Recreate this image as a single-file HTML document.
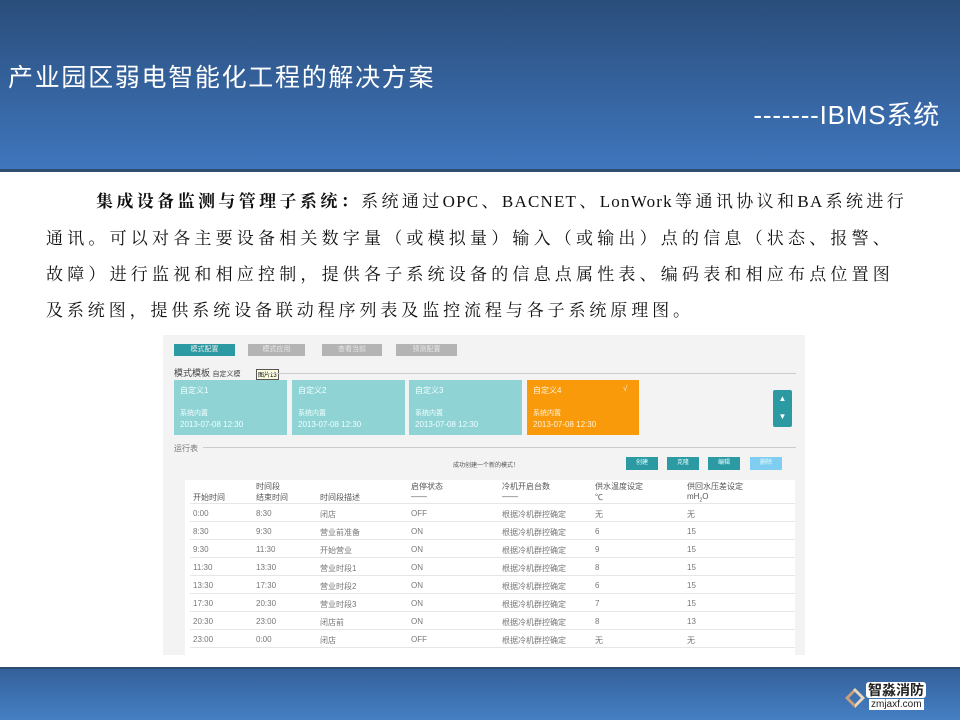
<!DOCTYPE html>
<html><head><meta charset="utf-8"><style>
*{margin:0;padding:0;box-sizing:border-box}
body{width:960px;height:720px;overflow:hidden;background:#fff;position:relative;font-family:"Liberation Sans","Noto Sans CJK SC",sans-serif}
.a{position:absolute;white-space:nowrap}
#hdr{position:absolute;left:0;top:0;width:960px;height:172px;background:linear-gradient(#2a4d7b,#3f76bd);border-bottom:3px solid #2f4d6e}
#ftr{position:absolute;left:0;top:667px;width:960px;height:53px;background:linear-gradient(#34609a,#4580c4);border-top:2px solid #2d4d72}
.t{font-family:"Liberation Serif","Noto Serif CJK SC",serif;font-size:17px;color:#111;letter-spacing:3.7px}
.s{font-size:8px;color:#555}
.tab{position:absolute;top:344px;height:12px;background:#b4b4b4;color:#e8e8e8;font-size:7px;text-align:center;line-height:12px}
.card{position:absolute;top:380px;width:113px;height:55px;background:#8fd3d4;color:#f2ffff;font-size:8px}
.card div{position:absolute;left:6px}
.btn{position:absolute;top:457px;width:32px;height:13px;background:#2b9aa3;color:#e8ffff;font-size:6px;text-align:center;line-height:13px}
.row{position:absolute;left:190px;width:605px;height:18px;border-bottom:1px solid #e6e6e6;font-size:8px;color:#777}
.row span{position:absolute;top:5px}
</style></head><body>
<div id="hdr"></div>
<div class="a" style="left:8px;top:58px;font-size:25px;color:#fff;letter-spacing:1.7px">产业园区弱电智能化工程的解决方案</div>
<div class="a" style="right:20px;top:95px;font-size:26px;color:#fff;letter-spacing:0.8px">-------IBMS系统</div>

<div class="a t" style="left:96px;top:187px;width:809px;text-align:justify;text-align-last:justify;letter-spacing:1.2px"><b>集成设备监测与管理子系统：</b>系统通过OPC、BACNET、LonWork等通讯协议和BA系统进行</div>
<div class="a t" style="left:46px;top:224px;letter-spacing:4.2px">通讯。可以对各主要设备相关数字量（或模拟量）输入（或输出）点的信息（状态、报警、</div>
<div class="a t" style="left:46px;top:260px;letter-spacing:4.2px">故障）进行监视和相应控制，提供各子系统设备的信息点属性表、编码表和相应布点位置图</div>
<div class="a t" style="left:46px;top:296px;letter-spacing:3.9px">及系统图，提供系统设备联动程序列表及监控流程与各子系统原理图。</div>

<div class="a" style="left:163px;top:335px;width:642px;height:320px;background:#f3f3f3"></div>
<div class="tab" style="left:174px;width:61px;background:#2b9aa3">模式配置</div>
<div class="tab" style="left:248px;width:57px">模式应用</div>
<div class="tab" style="left:322px;width:60px">查看当前</div>
<div class="tab" style="left:396px;width:61px">预测配置</div>
<div class="a" style="left:174px;top:366px;font-size:9px;color:#444">模式模板 <span style="font-size:7px">自定义模</span></div>
<div class="a" style="left:256px;top:369px;font-size:6px;background:#ffffe0;border:1px solid #555;padding:0 1px">图片13</div>
<div class="a" style="left:262px;top:373px;width:534px;height:1px;background:#ccc"></div>
<div class="card" style="left:174px"><div style="top:5px">自定义1</div><div style="top:28px;font-size:7px">系统内置</div><div style="top:40px">2013-07-08 12:30</div></div>
<div class="card" style="left:292px"><div style="top:5px">自定义2</div><div style="top:28px;font-size:7px">系统内置</div><div style="top:40px">2013-07-08 12:30</div></div>
<div class="card" style="left:409px"><div style="top:5px">自定义3</div><div style="top:28px;font-size:7px">系统内置</div><div style="top:40px">2013-07-08 12:30</div></div>
<div class="card" style="left:527px;width:112px;background:#f99a0a;color:#fff2dd"><div style="top:5px">自定义4</div><div style="top:4px;left:96px">√</div><div style="top:28px;font-size:7px">系统内置</div><div style="top:40px">2013-07-08 12:30</div></div>
<div class="a" style="left:773px;top:390px;width:19px;height:37px;background:#2b9aa3;border-radius:2px;color:#fff;font-size:8px;text-align:center;line-height:18px">▲<br>▼</div>
<div class="a" style="left:174px;top:443px;font-size:8px;color:#777">运行表</div>
<div class="a" style="left:203px;top:447px;width:593px;height:1px;background:#ccc"></div>
<div class="a" style="left:453px;top:460px;font-size:6px;color:#555">成功创建一个新的模式！</div>
<div class="btn" style="left:626px">创建</div><div class="btn" style="left:667px">克隆</div><div class="btn" style="left:708px">编辑</div><div class="btn" style="left:750px;background:#7fcdf0">删除</div>

<div class="a" style="left:185px;top:480px;width:610px;height:175px;background:#fff"></div>
<div class="a s" style="left:256px;top:481px">时间段</div>
<div class="a s" style="left:193px;top:492px">开始时间</div>
<div class="a s" style="left:256px;top:492px">结束时间</div>
<div class="a s" style="left:320px;top:492px">时间段描述</div>
<div class="a s" style="left:411px;top:481px">启停状态<br>——</div>
<div class="a s" style="left:502px;top:481px">冷机开启台数<br>——</div>
<div class="a s" style="left:595px;top:481px">供水温度设定<br>℃</div>
<div class="a s" style="left:687px;top:481px">供回水压差设定<br>mH<sub style="font-size:5px">2</sub>O</div>
<div class="row" style="top:486px;height:18px"></div>
<div class="row" style="top:504px"><span style="left:3px">0:00</span><span style="left:66px">8:30</span><span style="left:130px">闭店</span><span style="left:221px">OFF</span><span style="left:312px">根据冷机群控确定</span><span style="left:405px">无</span><span style="left:497px">无</span></div>
<div class="row" style="top:522px"><span style="left:3px">8:30</span><span style="left:66px">9:30</span><span style="left:130px">营业前准备</span><span style="left:221px">ON</span><span style="left:312px">根据冷机群控确定</span><span style="left:405px">6</span><span style="left:497px">15</span></div>
<div class="row" style="top:540px"><span style="left:3px">9:30</span><span style="left:66px">11:30</span><span style="left:130px">开始营业</span><span style="left:221px">ON</span><span style="left:312px">根据冷机群控确定</span><span style="left:405px">9</span><span style="left:497px">15</span></div>
<div class="row" style="top:558px"><span style="left:3px">11:30</span><span style="left:66px">13:30</span><span style="left:130px">营业时段1</span><span style="left:221px">ON</span><span style="left:312px">根据冷机群控确定</span><span style="left:405px">8</span><span style="left:497px">15</span></div>
<div class="row" style="top:576px"><span style="left:3px">13:30</span><span style="left:66px">17:30</span><span style="left:130px">营业时段2</span><span style="left:221px">ON</span><span style="left:312px">根据冷机群控确定</span><span style="left:405px">6</span><span style="left:497px">15</span></div>
<div class="row" style="top:594px"><span style="left:3px">17:30</span><span style="left:66px">20:30</span><span style="left:130px">营业时段3</span><span style="left:221px">ON</span><span style="left:312px">根据冷机群控确定</span><span style="left:405px">7</span><span style="left:497px">15</span></div>
<div class="row" style="top:612px"><span style="left:3px">20:30</span><span style="left:66px">23:00</span><span style="left:130px">闭店前</span><span style="left:221px">ON</span><span style="left:312px">根据冷机群控确定</span><span style="left:405px">8</span><span style="left:497px">13</span></div>
<div class="row" style="top:630px"><span style="left:3px">23:00</span><span style="left:66px">0:00</span><span style="left:130px">闭店</span><span style="left:221px">OFF</span><span style="left:312px">根据冷机群控确定</span><span style="left:405px">无</span><span style="left:497px">无</span></div>

<div id="ftr"></div>
<svg class="a" style="left:843px;top:687px" width="24" height="22" viewBox="0 0 24 22"><path d="M12 1 L2 11 L12 21 L14 19 L6 11 L12 5Z" fill="#c9a079"/><path d="M12 21 L22 11 L12 1 L10 3 L18 11 L12 17Z" fill="#e8d6c0"/></svg>
<div class="a" style="left:866px;top:682px;font-size:14px;font-weight:bold;color:#222;background:#fff;padding:0 2px;border-radius:3px;line-height:16px">智淼消防</div>
<div class="a" style="left:869px;top:699px;font-size:10px;color:#222;background:#fff;padding:0 2px;line-height:11px">zmjaxf.com</div>
</body></html>
